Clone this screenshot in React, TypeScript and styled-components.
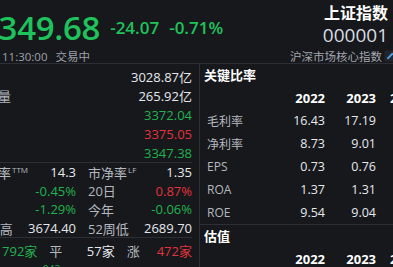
import React from "react";
import styled, { createGlobalStyle } from "styled-components";

const GlobalStyle = createGlobalStyle`
  html, body {
    margin: 0;
    padding: 0;
    background: #16181c;
    overflow: hidden;
  }
  body {
    width: 393px;
    height: 267px;
    font-family: "Open Sans", "Noto Sans CJK SC", sans-serif;
  }
`;

const GREEN = "#22b24f";
const RED = "#e5323c";
const WHITE = "#e6e8ec";
const GRAY = "#b5b8bf";
const LINE = "#2c2f35";

/* the screenshot is a crop of a wider page: shift the page to the crop */
const Root = styled.div`
  margin-left: -35px;
  width: 431px;
  height: 267px;
  display: flex;
  flex-direction: column;
  background: #16181c;
  color: ${WHITE};
  font-family: "Open Sans", "Noto Sans CJK SC", sans-serif;
`;

const Header = styled.header`
  display: flex;
  justify-content: space-between;
  height: 64px;
  box-sizing: border-box;
  border-bottom: 1px solid ${LINE};
  flex-shrink: 0;
`;

const QuoteBlock = styled.div`
  display: flex;
  flex-direction: column;
  padding-left: 15px;
`;

const PriceRow = styled.div`
  display: flex;
  align-items: center;
  gap: 10px;
  height: 48px;
  padding-top: 3px;
  white-space: nowrap;
`;

const BigPrice = styled.span`
  font-size: 33px;
  font-weight: 600;
  color: #1fc35b;
  line-height: 1;
  letter-spacing: -0.3px;
`;

const Change = styled.span`
  font-size: 17px;
  font-weight: 600;
  color: #1fc35b;
  line-height: 1;
`;

const StatusRow = styled.div`
  display: flex;
  gap: 8px;
  padding-left: 22px;
  font-size: 11.5px;
  line-height: 12px;
  color: #9ea2a9;
  white-space: nowrap;
`;

const NameBlock = styled.div`
  display: flex;
  flex-direction: column;
  align-items: flex-end;
`;

const Title = styled.div`
  font-size: 16px;
  font-weight: 700;
  color: #ffffff;
  line-height: 22px;
  padding: 2px 8px 0 0;
`;

const Code = styled.div`
  font-size: 19px;
  color: #d9dce1;
  line-height: 22px;
  padding-right: 8px;
`;

const TagRow = styled.div`
  display: flex;
  align-items: center;
  gap: 2px;
  height: 14px;
  margin-top: 3px;
  font-size: 11.5px;
  color: #a3a6ad;
  white-space: nowrap;
`;

const Body = styled.div`
  display: flex;
  flex: 1;
  min-height: 0;
`;

const LeftPanel = styled.section`
  width: 235px;
  flex-shrink: 0;
  box-sizing: border-box;
  border-right: 1px solid ${LINE};
  padding: 0 7px;
  display: flex;
  flex-direction: column;
  overflow: hidden;
`;

const StatList = styled.div`
  padding-top: 3px;
  border-bottom: 1px solid ${LINE};
`;

const StatRow = styled.div`
  display: flex;
  justify-content: space-between;
  align-items: center;
  height: 19px;
  font-size: 13px;
  white-space: nowrap;
`;

const Label = styled.span`
  color: ${GRAY};
`;

const Value = styled.span<{ $tone?: "up" | "down" | "flat" }>`
  color: ${(p) => (p.$tone === "up" ? RED : p.$tone === "down" ? GREEN : WHITE)};
`;

const Sup = styled.sup`
  font-size: 8px;
  line-height: 0;
  vertical-align: 5px;
  margin-left: 1px;
  color: ${GRAY};
`;

const StatGrid = styled.div`
  display: grid;
  grid-template-columns: 1fr 1fr;
  column-gap: 12px;
  grid-auto-rows: 18.6px;
  border-bottom: 1px solid ${LINE};
`;

const Cell = styled.div`
  display: flex;
  justify-content: space-between;
  align-items: center;
  font-size: 13px;
  white-space: nowrap;
`;

const BreadthRow = styled.div`
  display: grid;
  grid-template-columns: 1fr 1fr 1fr;
  column-gap: 12px;
  height: 21px;
  padding-top: 3px;
  align-items: center;
`;

const BreadthLabel = styled.span`
  color: ${GRAY};
  font-size: 13px;
`;

const DistRow = styled.div`
  padding: 3px 0 0 71px;
  font-size: 10px;
  color: ${GREEN};
  line-height: 12px;
`;

const RightPanel = styled.section`
  flex: 1;
  min-width: 0;
  overflow: hidden;
  display: flex;
  flex-direction: column;
`;

const Block = styled.div<{ $divided?: boolean }>`
  border-top: ${(p) => (p.$divided ? `1px solid ${LINE}` : "none")};
`;

const BlockTitle = styled.div`
  height: 22px;
  line-height: 22px;
  padding-left: 4px;
  font-size: 13px;
  font-weight: 700;
  color: #ffffff;
`;

const RatioTable = styled.div`
  display: grid;
  grid-template-columns: 67px 51px 51px 51px;
  grid-auto-rows: 23px;
  padding-left: 7px;
  width: max-content;
  align-items: center;
`;

const RatioHead = styled.span`
  text-align: right;
  font-size: 13px;
  font-weight: 700;
  color: #ffffff;
  white-space: nowrap;
`;

const RatioLabel = styled.span`
  font-size: 12px;
  color: ${GRAY};
`;

const RatioValue = styled.span`
  text-align: right;
  font-size: 12.5px;
  color: ${WHITE};
`;

const EditIcon = () => (
  <svg width="12" height="12" viewBox="0 0 12 12" aria-hidden="true">
    <rect x="0.5" y="0.5" width="11" height="11" rx="1.5" fill="#23262c" />
    <path d="M3 9.2 L3.4 7.4 L8.2 2.6 L9.6 4 L4.8 8.8 Z" fill="#4da3e8" />
  </svg>
);

const stats = [
  { label: "金额", value: "3028.87亿" },
  { label: "成交量", value: "265.92亿" },
  { label: "今开", value: "3372.04", tone: "down" as const },
  { label: "最高", value: "3375.05", tone: "up" as const },
  { label: "最低", value: "3347.38", tone: "down" as const },
];

type Tone = "up" | "down" | "flat";
const grid: { label: React.ReactNode; value: string; tone?: Tone }[] = [
  { label: <>市盈率<Sup>TTM</Sup></>, value: "14.3" },
  { label: <>市净率<Sup>LF</Sup></>, value: "1.35" },
  { label: "5日", value: "-0.45%", tone: "down" },
  { label: "20日", value: "0.87%", tone: "up" },
  { label: "60日", value: "-1.29%", tone: "down" },
  { label: "今年", value: "-0.06%", tone: "down" },
  { label: "52周高", value: "3674.40" },
  { label: "52周低", value: "2689.70" },
];

const ratios = [
  { label: "毛利率", v: ["16.43", "17.19", "17.02"] },
  { label: "净利率", v: ["8.73", "9.01", "8.95"] },
  { label: "EPS", v: ["0.73", "0.76", "0.78"] },
  { label: "ROA", v: ["1.37", "1.31", "1.29"] },
  { label: "ROE", v: ["9.54", "9.04", "8.87"] },
];

const years = ["2022", "2023", "2024E"];

export default function App() {
  return (
    <>
      <GlobalStyle />
      <Root>
        <Header>
          <QuoteBlock>
            <PriceRow>
              <BigPrice>3349.68</BigPrice>
              <Change>-24.07</Change>
              <Change>-0.71%</Change>
            </PriceRow>
            <StatusRow>
              <span>11:30:00</span>
              <span>交易中</span>
            </StatusRow>
          </QuoteBlock>
          <NameBlock>
            <Title>上证指数</Title>
            <Code>000001</Code>
            <TagRow>
              <span>沪深市场核心指数</span>
              <EditIcon />
            </TagRow>
          </NameBlock>
        </Header>
        <Body>
          <LeftPanel>
            <StatList>
              {stats.map((s) => (
                <StatRow key={s.label}>
                  <Label>{s.label}</Label>
                  <Value $tone={s.tone}>{s.value}</Value>
                </StatRow>
              ))}
            </StatList>
            <StatGrid>
              {grid.map((g, i) => (
                <Cell key={i}>
                  <Label>{g.label}</Label>
                  <Value $tone={g.tone}>{g.value}</Value>
                </Cell>
              ))}
            </StatGrid>
            <BreadthRow>
              <Cell>
                <BreadthLabel>跌</BreadthLabel>
                <Value $tone="down">1792家</Value>
              </Cell>
              <Cell>
                <BreadthLabel>平</BreadthLabel>
                <Value>57家</Value>
              </Cell>
              <Cell>
                <BreadthLabel>涨</BreadthLabel>
                <Value $tone="up">472家</Value>
              </Cell>
            </BreadthRow>
            <DistRow>943</DistRow>
          </LeftPanel>
          <RightPanel>
            <Block>
              <BlockTitle>关键比率</BlockTitle>
              <RatioTable>
                <span />
                {years.map((y) => (
                  <RatioHead key={y}>{y}</RatioHead>
                ))}
                {ratios.map((r) => (
                  <React.Fragment key={r.label}>
                    <RatioLabel>{r.label}</RatioLabel>
                    {r.v.map((v, i) => (
                      <RatioValue key={i}>{v}</RatioValue>
                    ))}
                  </React.Fragment>
                ))}
              </RatioTable>
            </Block>
            <Block $divided>
              <BlockTitle>估值</BlockTitle>
              <RatioTable>
                <span />
                {years.map((y) => (
                  <RatioHead key={y}>{y}</RatioHead>
                ))}
              </RatioTable>
            </Block>
          </RightPanel>
        </Body>
      </Root>
    </>
  );
}
